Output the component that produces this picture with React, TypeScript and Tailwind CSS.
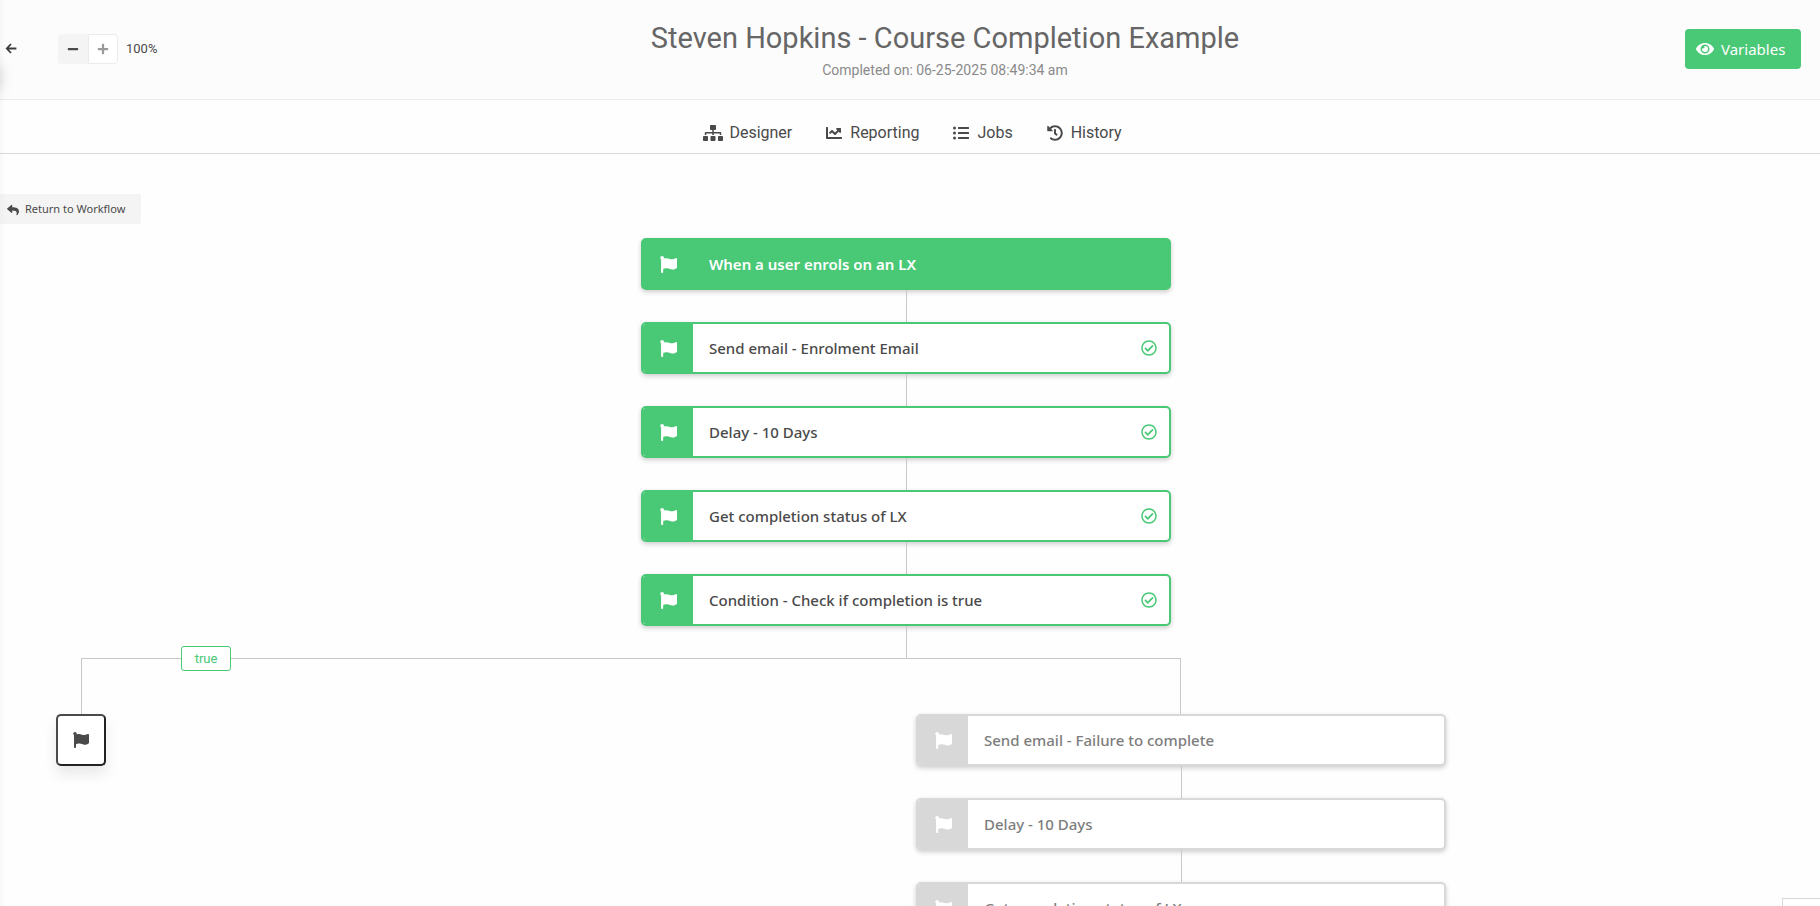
import React from "react";
import {
  FaChartLine,
  FaEye,
  FaFlag,
  FaHistory,
  FaListUl,
  FaMinus,
  FaPlus,
  FaRegCheckCircle,
  FaReply,
  FaSitemap,
} from "react-icons/fa";

const uiFont = "font-['Segoe_UI','Noto_Sans',sans-serif]";

type Status = "trigger" | "done" | "pending";

interface Step {
  title: string;
  status: Status;
}

const mainSteps: Step[] = [
  { title: "When a user enrols on an LX", status: "trigger" },
  { title: "Send email - Enrolment Email", status: "done" },
  { title: "Delay - 10 Days", status: "done" },
  { title: "Get completion status of LX", status: "done" },
  { title: "Condition - Check if completion is true", status: "done" },
];

const failureSteps: Step[] = [
  { title: "Send email - Failure to complete", status: "pending" },
  { title: "Delay - 10 Days", status: "pending" },
  { title: "Get completion status of LX", status: "pending" },
];

const cardStyles: Record<Status, string> = {
  trigger: "border-[#49c876] bg-[#49c876] text-white font-semibold",
  done: "border-[#49c876] bg-white text-[#4a4a4a] font-medium",
  pending: "border-[#d8d8d8] bg-white text-[#7d7d7d] font-medium",
};

const stripStyles: Record<Status, string> = {
  trigger: "bg-[#49c876]",
  done: "bg-[#49c876]",
  pending: "bg-[#d8d8d8]",
};

function StepCard({ step }: { step: Step }) {
  return (
    <button
      type="button"
      className={`flex h-[52px] w-[530px] items-stretch overflow-hidden rounded-[5px] border-2 text-left text-[15px] shadow-[0_2px_5px_rgba(0,0,0,0.2)] ${uiFont} ${cardStyles[step.status]}`}
    >
      <span className={`flex w-[50px] shrink-0 items-center pl-[17px] text-white ${stripStyles[step.status]}`}>
        <FaFlag size={17} />
      </span>
      <span className="flex flex-1 items-center pl-4">{step.title}</span>
      {step.status === "done" && (
        <span className="flex items-center pr-3 text-[#49c876]">
          <FaRegCheckCircle size={16} />
        </span>
      )}
    </button>
  );
}

function Chain({ steps }: { steps: Step[] }) {
  return (
    <ol className="flex w-[530px] flex-col items-center">
      {steps.map((step, i) => (
        <li key={i} className="flex flex-col items-center">
          {i > 0 && <span className="ml-px h-8 w-px bg-[#c8c8c8]" />}
          <StepCard step={step} />
        </li>
      ))}
    </ol>
  );
}

const tabs = [
  { label: "Designer", icon: <FaSitemap className="h-4 w-5" /> },
  { label: "Reporting", icon: <FaChartLine className="mr-0.5 size-4" /> },
  { label: "Jobs", icon: <FaListUl className="mr-0.5 size-4" /> },
  { label: "History", icon: <FaHistory className="mr-0.5 size-4" /> },
];

export default function App() {
  return (
    <div className="relative flex h-screen flex-col overflow-hidden bg-[#fefefe] font-[Roboto,sans-serif] text-[#4a4a4a]">
      <header className="grid h-[100px] shrink-0 grid-cols-[205px_1fr_auto] border-b border-[#ebebeb] bg-[#fcfcfc] pr-[19px]">
        <div className="flex h-[98px] items-center">
          <button type="button" aria-label="Back" className="ml-[5px] text-[#3d3d3d]">
            <svg width="12" height="12" viewBox="0 0 12 12" fill="none" stroke="currentColor" strokeWidth="1.8">
              <path d="M6 1 1.8 5.5 6 10M2 5.5h9.4" />
            </svg>
          </button>
          <div className="ml-[41px] flex h-[30px]">
            <button type="button" aria-label="Zoom out" className="flex w-[30px] items-center justify-center rounded-l-[4px] bg-[#f4f4f4]">
              <FaMinus size={12} />
            </button>
            <button
              type="button"
              aria-label="Zoom in"
              className="flex w-[30px] items-center justify-center rounded-r-[4px] border border-[#ebebeb] bg-white text-[#9b9b9b]"
            >
              <FaPlus size={12} />
            </button>
          </div>
          <span className="ml-2 text-[13px]">100%</span>
        </div>
        <div className="flex flex-col items-center pt-5">
          <h1 className="text-[29px] leading-9 whitespace-nowrap text-[#666]">Steven Hopkins - Course Completion Example</h1>
          <p className="mt-1 text-[14px] leading-5 text-[#8a8a8a]">Completed on: 06-25-2025 08:49:34 am</p>
        </div>
        <button
          type="button"
          className={`mt-[29px] flex h-10 w-[116px] items-center gap-[7px] rounded-[4px] bg-[#49c876] pl-[11px] text-[15px] text-white ${uiFont}`}
        >
          <FaEye size={18} />
          Variables
        </button>
      </header>

      <nav className="flex h-[54px] shrink-0 items-end justify-center gap-[34px] border-b border-[#d8d8d8] pb-2 pl-[5px]">
        {tabs.map((tab) => (
          <a key={tab.label} href={`#${tab.label.toLowerCase()}`} className="flex items-center gap-[6px] text-[16px] leading-6">
            {tab.icon}
            {tab.label}
          </a>
        ))}
      </nav>

      <main className="min-h-0 flex-1 overflow-hidden pt-10">
        <button
          type="button"
          className={`flex h-[30px] w-[141px] items-center gap-[6px] rounded-r-[2px] bg-[#f4f4f4] pt-px pl-[7px] text-[11px] ${uiFont}`}
        >
          <FaReply size={12} />
          Return to Workflow
        </button>

        <div className="mt-[14px] ml-14 w-[1390px]">
          <div className="ml-[585px] flex w-[530px] flex-col items-center">
            <Chain steps={mainSteps} />
            <span className="ml-px h-8 w-px bg-[#c8c8c8]" />
          </div>
          <div className="relative ml-[25px] h-14 w-[1100px] border-x border-t border-[#c8c8c8]">
            <span className="absolute -top-[13px] left-[99px] flex h-[25px] w-[50px] items-center justify-center rounded-[3px] border border-[#49c876] bg-white text-[13px] text-[#49c876]">
              true
            </span>
          </div>
          <div className="flex items-start justify-between">
            <button
              type="button"
              aria-label="End of true branch"
              className="flex h-[52px] w-[50px] items-center justify-center rounded-[5px] border-2 border-t-[#4a4a4a] border-r-[#222] border-b-[#222] border-l-[#4a4a4a] bg-white shadow-[0_8px_14px_rgba(0,0,0,0.09)]"
            >
              <FaFlag size={16} />
            </button>
            <Chain steps={failureSteps} />
          </div>
        </div>
      </main>

      <div className="absolute right-0 bottom-0 h-2 w-[38px] border-t border-l border-[#d8d8d8] bg-white" />
      <div className="pointer-events-none absolute inset-y-0 left-0 w-[6px] bg-gradient-to-r from-black/[0.02] to-transparent" />
      <div className="pointer-events-none absolute top-[63px] -left-[31px] h-[30px] w-[30px] rounded-full shadow-[0_0_16px_rgba(0,0,0,0.22)]" />
    </div>
  );
}
